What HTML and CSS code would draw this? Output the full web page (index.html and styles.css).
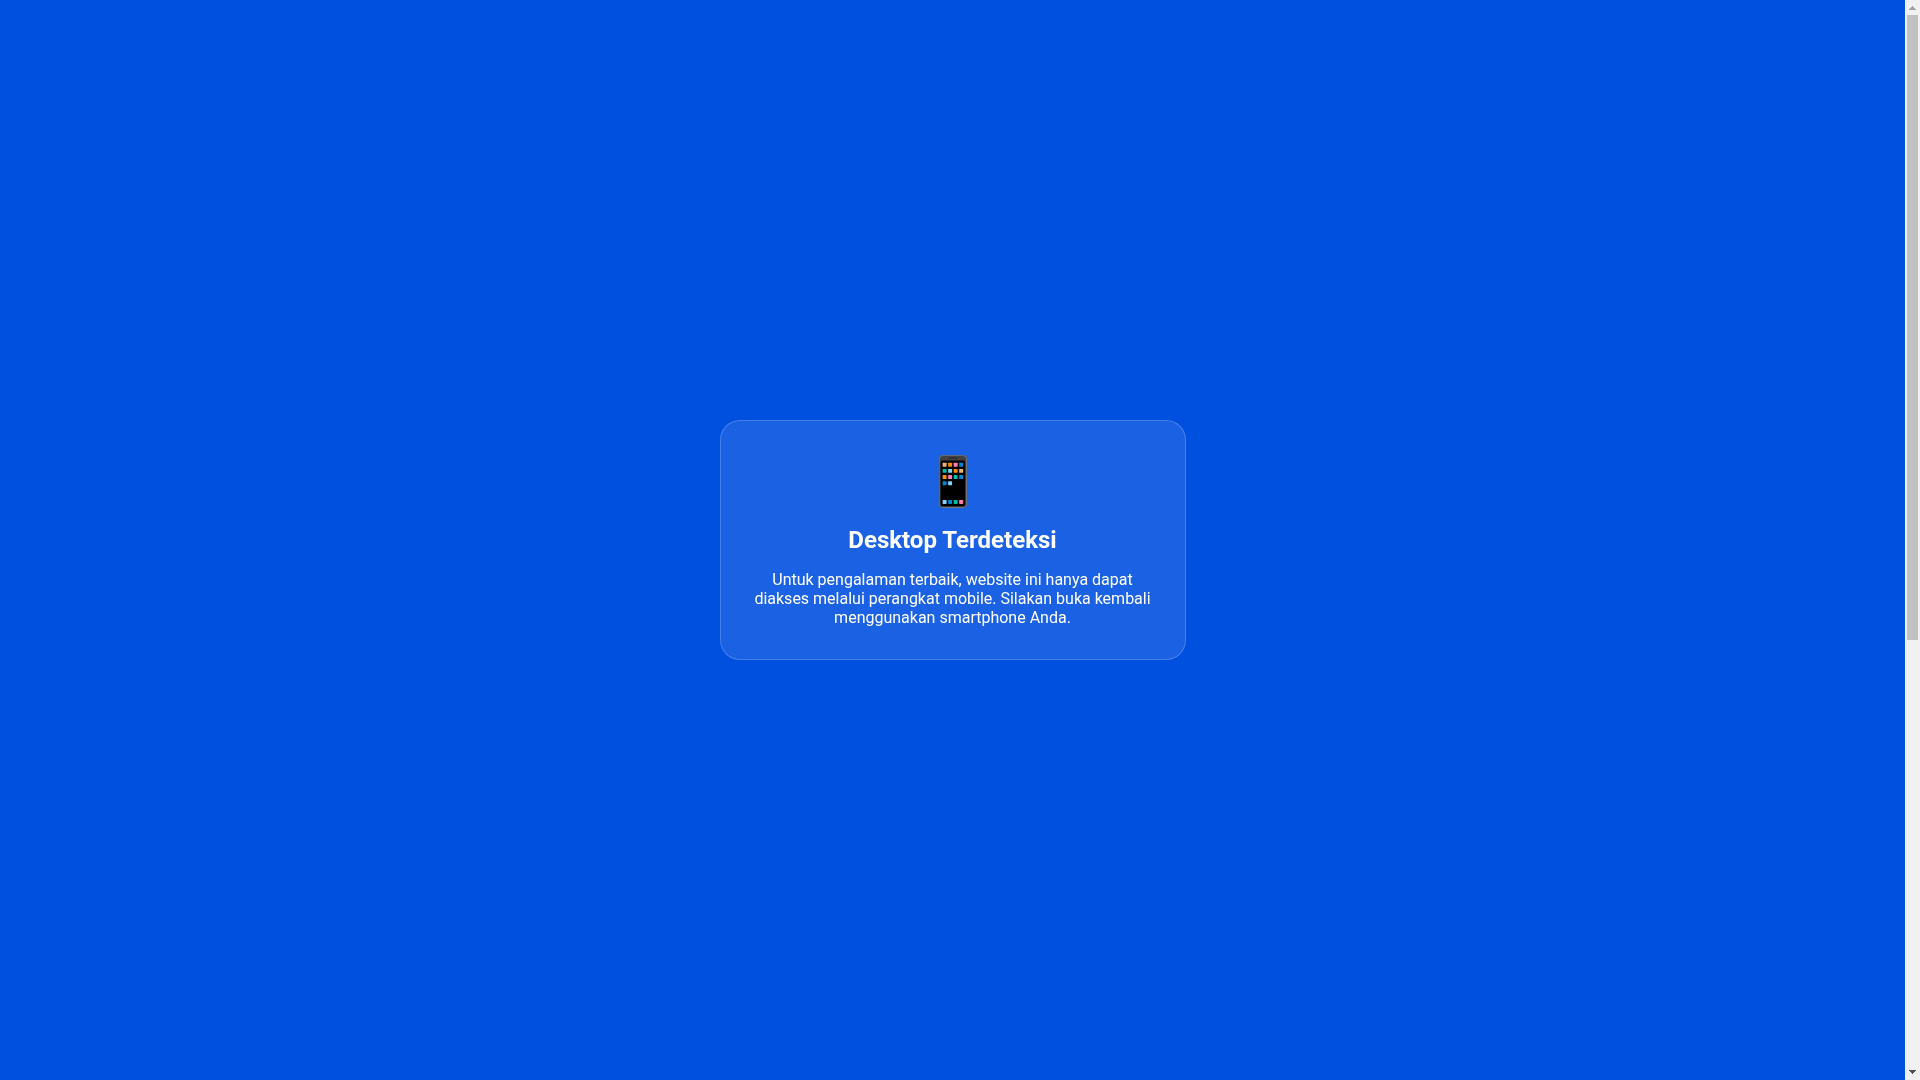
FILE: index.html
```html
<!DOCTYPE html>
<html lang="id">
<head>
    <meta charset="UTF-8">
    <meta name="viewport" content="width=device-width, initial-scale=1.0">
    <title>Desktop Terdeteksi</title>
    <link rel="stylesheet" href="styles.css">
</head>
<body>
    <main class="desktop-warning">
        <div class="warning-card">
            <div class="warning-icon">📱</div>
            <h2>Desktop Terdeteksi</h2>
            <p>Untuk pengalaman terbaik, website ini hanya dapat diakses melalui perangkat mobile. Silakan buka kembali menggunakan smartphone Anda.</p>
        </div>
    </main>
    <div class="scrollbar" aria-hidden="true">
        <svg class="scroll-arrow up" viewBox="0 0 15 15"><path d="M7 6h1v1h1v1h1v1h1v1H4V9h1V8h1V7h1z"/></svg>
        <div class="scroll-track">
            <div class="scroll-thumb"></div>
        </div>
        <svg class="scroll-arrow down" viewBox="0 0 15 15"><path d="M4 5h7v1h-1v1H9v1H8v1H7V8H6V7H5V6H4z"/></svg>
    </div>
</body>
</html>
```

FILE: styles.css
```css
* {
    margin: 0;
    padding: 0;
    box-sizing: border-box;
}

body {
    display: flex;
    font-family: Roboto, sans-serif;
    background-color: #0050e0;
    color: #fff;
    min-height: 100vh;
}

.desktop-warning {
    flex: 1;
    display: flex;
    justify-content: center;
    align-items: center;
    padding: 20px;
    text-align: center;
}

.warning-card {
    box-sizing: content-box;
    max-width: 400px;
    padding: 32px;
    background-color: rgba(255, 255, 255, 0.1);
    border: 1px solid rgba(255, 255, 255, 0.2);
    border-radius: 20px;
    backdrop-filter: blur(10px);
}

.warning-icon {
    font-size: 48px;
    margin-bottom: 16px;
}

.warning-card h2 {
    font-size: 24px;
    margin-bottom: 16px;
}

.warning-card p {
    font-size: 16px;
}

/* Scrollbar */
.scrollbar {
    display: flex;
    flex-direction: column;
    width: 15px;
    background-color: #f1f1f1;
}

.scroll-arrow {
    display: block;
    width: 15px;
    height: 15px;
    shape-rendering: crispEdges;
}

.scroll-arrow.up {
    fill: #a3a3a3;
}

.scroll-arrow.down {
    fill: #505050;
}

.scroll-track {
    flex: 1;
    display: flex;
    flex-direction: column;
    padding: 0 2px;
}

.scroll-thumb {
    flex-basis: 59.5%;
    background-color: #c1c1c1;
}
```
